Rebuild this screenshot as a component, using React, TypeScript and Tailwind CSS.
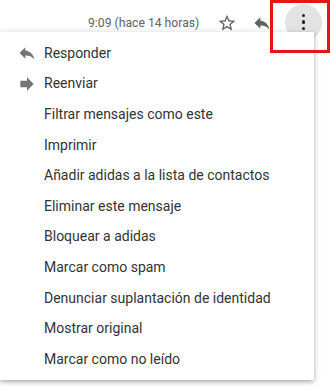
const items = [
  'Filtrar mensajes como este',
  'Imprimir',
  'Añadir adidas a la lista de contactos',
  'Eliminar este mensaje',
  'Bloquear a adidas',
  'Marcar como spam',
  'Denunciar suplantación de identidad',
  'Mostrar original',
  'Marcar como no leído',
]

function ReplyIcon({ className }: { className?: string }) {
  return (
    <svg viewBox="0 0 24 24" className={className} fill="currentColor">
      <path d="M10 9V5l-7 7 7 7v-4.1c5 0 8.5 1.6 11 5.1-1-5-4-10-11-11z" />
    </svg>
  )
}

function ForwardIcon({ className }: { className?: string }) {
  return (
    <svg viewBox="0 0 24 24" className={className} fill="currentColor">
      <path d="M12 8V4l8 8-8 8v-4H4V8z" />
    </svg>
  )
}

export default function App() {
  return (
    <div className="relative w-[330px] h-[387px] overflow-hidden bg-white font-['Roboto',sans-serif]">
      {/* Message header */}
      <div className="flex items-center h-[44px] pl-[88px]">
        <span className="text-[12.2px] text-[#5f6368] w-[129px] pt-[2px]">9:09 (hace 14 horas)</span>
        <svg viewBox="0 0 24 24" className="w-[20px] h-[20px] text-[#5f6368] mt-[2px]" fill="currentColor">
          <path d="M22 9.24l-7.19-.62L12 2 9.19 8.63 2 9.24l5.46 4.73L5.82 21 12 17.27 18.18 21l-1.63-7.03L22 9.24zM12 15.4l-3.76 2.27 1-4.28-3.32-2.88 4.38-.38L12 6.1l1.71 4.04 4.38.38-3.32 2.88 1 4.28L12 15.4z" />
        </svg>
        <ReplyIcon className="ml-[15px] w-[20px] h-[20px] text-[#5f6368] mt-[2px]" />
        <div className="ml-[13px] w-[37px] h-[37px] rounded-full bg-[#e3e3e3] flex flex-col items-center justify-center gap-[3px]">
          <span className="w-[3.5px] h-[3.5px] rounded-full bg-[#202124]" />
          <span className="w-[3.5px] h-[3.5px] rounded-full bg-[#202124]" />
          <span className="w-[3.5px] h-[3.5px] rounded-full bg-[#202124]" />
        </div>
      </div>

      {/* Dropdown menu */}
      <div className="absolute left-0 top-[32px] w-[314px] h-[348px] bg-white shadow-[0_2px_4px_rgba(0,0,0,0.25),0_1px_8px_rgba(0,0,0,0.12)] pt-[6px]">
        <div className="flex items-center h-[30.6px]">
          <ReplyIcon className="ml-[17px] mr-[7px] w-[20px] h-[20px] text-[#757575]" />
          <span className="text-[14px] text-[#333]">Responder</span>
        </div>
        <div className="flex items-center h-[30.6px]">
          <ForwardIcon className="ml-[17px] mr-[7px] w-[20px] h-[20px] text-[#757575]" />
          <span className="text-[14px] text-[#333]">Reenviar</span>
        </div>
        {items.map((label) => (
          <div key={label} className="flex items-center h-[30.6px] pl-[44px]">
            <span className="text-[14px] text-[#333]">{label}</span>
          </div>
        ))}
      </div>

      {/* Highlight box */}
      <div className="absolute left-[270px] top-0 w-[60px] h-[53px] border-[3px] border-[#e8141b]" />
    </div>
  )
}
